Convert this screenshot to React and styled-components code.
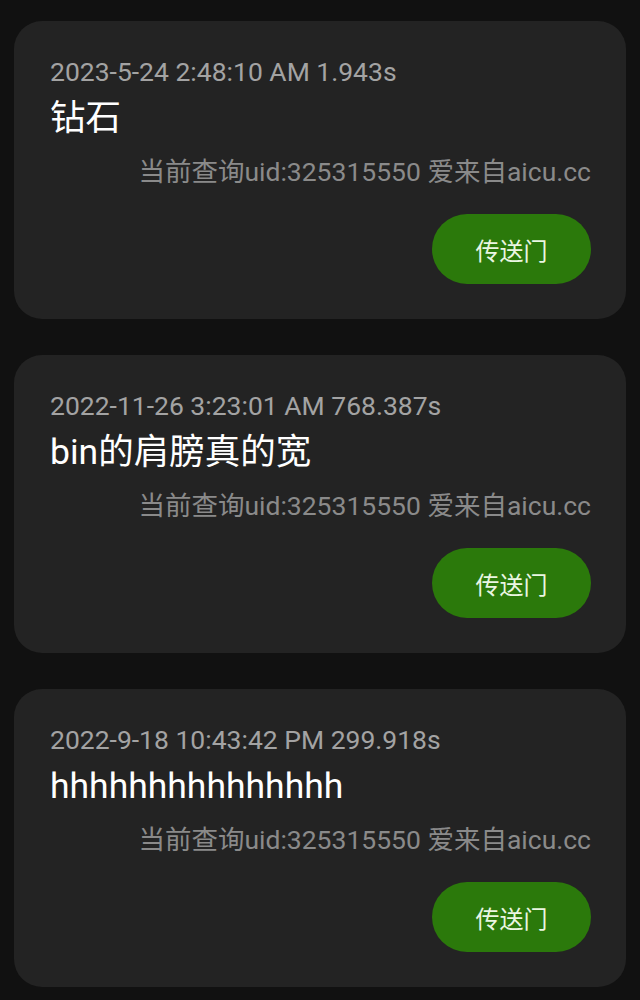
import React from "react";
import styled, { createGlobalStyle } from "styled-components";

const GlobalStyle = createGlobalStyle`
  body {
    margin: 0;
    background: #111111;
    font-family: Roboto, "Noto Sans CJK SC", sans-serif;
  }
`;

const List = styled.div`
  display: flex;
  flex-direction: column;
  gap: 36px;
  padding: 21px 14px;
`;

const Card = styled.div`
  background: #232323;
  border-radius: 28px;
  padding: 36px 35px 35px 36px;
  display: flex;
  flex-direction: column;
`;

const Time = styled.div`
  font-size: 26.5px;
  line-height: 30px;
  color: #a3a3a3;
  white-space: nowrap;
`;

const Title = styled.div`
  margin-top: 10px;
  font-size: 35.5px;
  line-height: 42px;
  color: #ffffff;
  white-space: nowrap;
`;

const Source = styled.div`
  margin-top: 18px;
  font-size: 26.5px;
  line-height: 30px;
  color: #8a8a8a;
  text-align: right;
  white-space: nowrap;
`;

const Actions = styled.div`
  margin-top: 27px;
  display: flex;
  justify-content: flex-end;
`;

const Portal = styled.button`
  width: 159px;
  height: 70px;
  border: none;
  border-radius: 35px;
  background: #2b790b;
  color: #eaf6e2;
  font-family: Roboto, "Noto Sans CJK SC", sans-serif;
  font-size: 24px;
`;

const records = [
  { time: "2023-5-24 2:48:10 AM 1.943s", title: "钻石" },
  { time: "2022-11-26 3:23:01 AM 768.387s", title: "bin的肩膀真的宽" },
  { time: "2022-9-18 10:43:42 PM 299.918s", title: "hhhhhhhhhhhhhhh" },
];

const App = () => {
  return (
    <>
      <GlobalStyle />
      <List>
        {records.map((r) => (
          <Card key={r.time}>
            <Time>{r.time}</Time>
            <Title>{r.title}</Title>
            <Source>当前查询uid:325315550 爱来自aicu.cc</Source>
            <Actions>
              <Portal>传送门</Portal>
            </Actions>
          </Card>
        ))}
      </List>
    </>
  );
};

export default App;
